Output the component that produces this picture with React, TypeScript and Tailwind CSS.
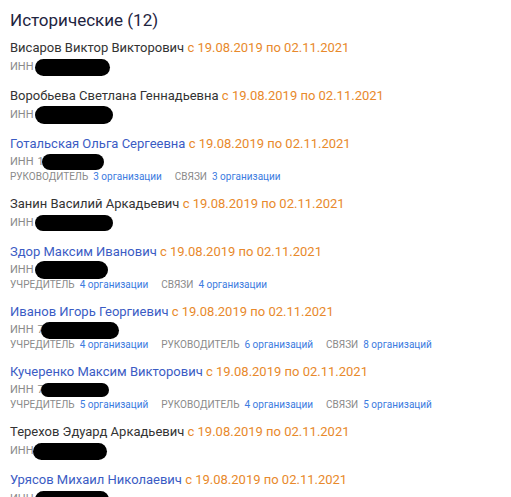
type Rel = { label: string; value: string };

type Person = {
  name: string;
  link: boolean;
  digit?: string;
  blob: { w: number; h: number; ml: number; dy: number };
  rels?: Rel[];
};

const people: Person[] = [
  { name: "Висаров Виктор Викторович", link: false, blob: { w: 75, h: 17, ml: 1, dy: 1 } },
  { name: "Воробьева Светлана Геннадьевна", link: false, blob: { w: 78, h: 18, ml: 1, dy: 1 } },
  {
    name: "Готальская Ольга Сергеевна",
    link: true,
    digit: "1",
    blob: { w: 62, h: 16, ml: -2, dy: 0 },
    rels: [
      { label: "Руководитель", value: "3 организации" },
      { label: "Связи", value: "3 организации" },
    ],
  },
  { name: "Занин Василий Аркадьевич", link: false, blob: { w: 78, h: 16, ml: 1, dy: 1 } },
  {
    name: "Здор Максим Иванович",
    link: true,
    blob: { w: 73, h: 18, ml: 1, dy: 1 },
    rels: [
      { label: "Учредитель", value: "4 организации" },
      { label: "Связи", value: "4 организации" },
    ],
  },
  {
    name: "Иванов Игорь Георгиевич",
    link: true,
    digit: "7",
    blob: { w: 78, h: 17, ml: -3, dy: 1 },
    rels: [
      { label: "Учредитель", value: "4 организации" },
      { label: "Руководитель", value: "6 организаций" },
      { label: "Связи", value: "8 организаций" },
    ],
  },
  {
    name: "Кучеренко Максим Викторович",
    link: true,
    digit: "7",
    blob: { w: 68, h: 14, ml: -3, dy: 0 },
    rels: [
      { label: "Учредитель", value: "5 организаций" },
      { label: "Руководитель", value: "4 организации" },
      { label: "Связи", value: "5 организаций" },
    ],
  },
  { name: "Терехов Эдуард Аркадьевич", link: false, blob: { w: 74, h: 17, ml: -1, dy: 2 } },
  { name: "Урясов Михаил Николаевич", link: true, blob: { w: 74, h: 17, ml: 1, dy: 1 } },
];

function Entry({ p }: { p: Person }) {
  return (
    <div className="mb-[11px]">
      <div className="text-[13px] leading-[18px] whitespace-nowrap">
        <span className={p.link ? "text-[#3b5cc4]" : "text-[#333333]"}>{p.name}</span>{" "}
        <span className="text-[#e8892b]">с 19.08.2019 по 02.11.2021</span>
      </div>
      <div
        className={`flex items-center text-[11px] leading-[14px] text-[#8a8a8a] ${
          p.rels ? "h-[17px]" : "h-[19px]"
        }`}
      >
        <span>ИНН</span>
        {p.digit && <span className="ml-[4px]">{p.digit}</span>}
        <div
          className="bg-black rounded-full shrink-0"
          style={{
            width: p.blob.w,
            height: p.blob.h,
            marginLeft: p.blob.ml,
            marginTop: p.blob.dy,
          }}
        />
      </div>
      {p.rels && (
        <div className="flex items-center gap-[13px] h-[14px] text-[10px] leading-[14px] whitespace-nowrap">
          {p.rels.map((r) => (
            <div key={r.label} className="flex gap-[5px]">
              <span className="uppercase text-[#8a8a8a]">{r.label}</span>
              <span className="text-[#3b7be0]">{r.value}</span>
            </div>
          ))}
        </div>
      )}
    </div>
  );
}

export default function App() {
  return (
    <div
      className="w-[511px] h-[497px] overflow-hidden bg-white px-[10px] pt-[9px]"
      style={{ fontFamily: "Roboto, 'Noto Sans', sans-serif" }}
    >
      <h2 className="text-[17px] leading-[22px] text-[#1e2440] mb-[8px]">Исторические (12)</h2>
      {people.map((p) => (
        <Entry key={p.name} p={p} />
      ))}
    </div>
  );
}
